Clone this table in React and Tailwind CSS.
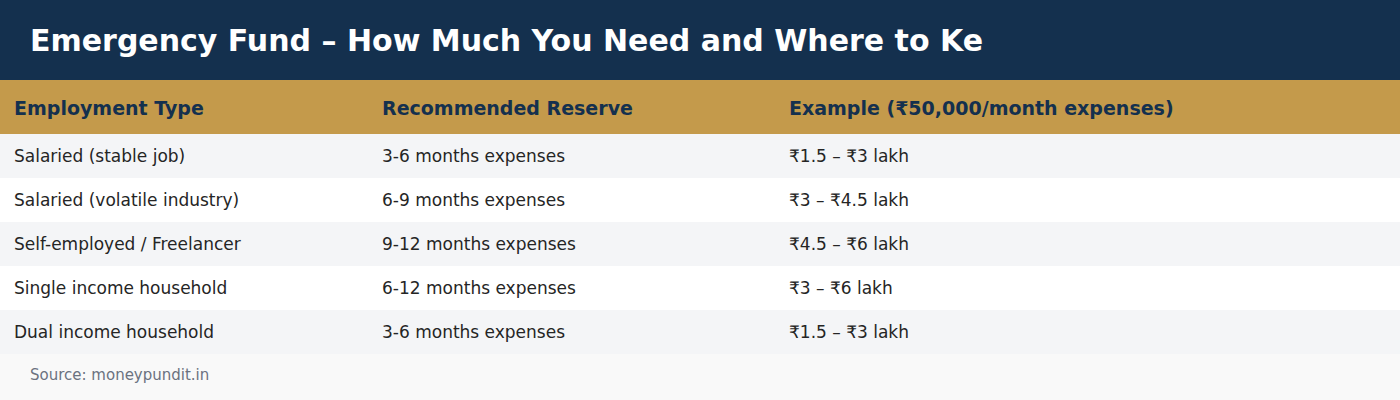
const rows = [
  ['Salaried (stable job)', '3-6 months expenses', '₹1.5 – ₹3 lakh'],
  ['Salaried (volatile industry)', '6-9 months expenses', '₹3 – ₹4.5 lakh'],
  ['Self-employed / Freelancer', '9-12 months expenses', '₹4.5 – ₹6 lakh'],
  ['Single income household', '6-12 months expenses', '₹3 – ₹6 lakh'],
  ['Dual income household', '3-6 months expenses', '₹1.5 – ₹3 lakh'],
];

export default function App() {
  return (
    <div className="w-[1400px] h-[400px] overflow-hidden bg-white font-['DejaVu_Sans',sans-serif]">
      <header className="h-[80px] bg-[#14304e] flex items-center px-[30px]">
        <h1 className="text-[30px] font-bold text-white whitespace-nowrap leading-none pt-[2px]">
          Emergency Fund – How Much You Need and Where to Ke
        </h1>
      </header>

      <table className="w-full border-collapse table-fixed">
        <colgroup>
          <col className="w-[368px]" />
          <col className="w-[407px]" />
          <col />
        </colgroup>
        <thead>
          <tr className="h-[54px] bg-[#c49a4b] text-[#14304e] text-[19px] font-bold text-left">
            <th className="px-[14px] pt-[2px]">Employment Type</th>
            <th className="px-[14px] pt-[2px]">Recommended Reserve</th>
            <th className="px-[14px] pt-[2px]">Example (₹50,000/month expenses)</th>
          </tr>
        </thead>
        <tbody>
          {rows.map((r, i) => (
            <tr
              key={i}
              className={`h-[44px] text-[17px] text-[#252525] ${i % 2 === 0 ? 'bg-[#f4f5f7]' : 'bg-white'}`}
            >
              {r.map((c, j) => (
                <td key={j} className="px-[14px] pt-[1px]">{c}</td>
              ))}
            </tr>
          ))}
        </tbody>
      </table>

      <footer className="h-[46px] bg-[#f9f9f9] flex items-center px-[30px] pb-[4px]">
        <p className="text-[15px] text-[#6b7280]">Source: moneypundit.in</p>
      </footer>
    </div>
  );
}
